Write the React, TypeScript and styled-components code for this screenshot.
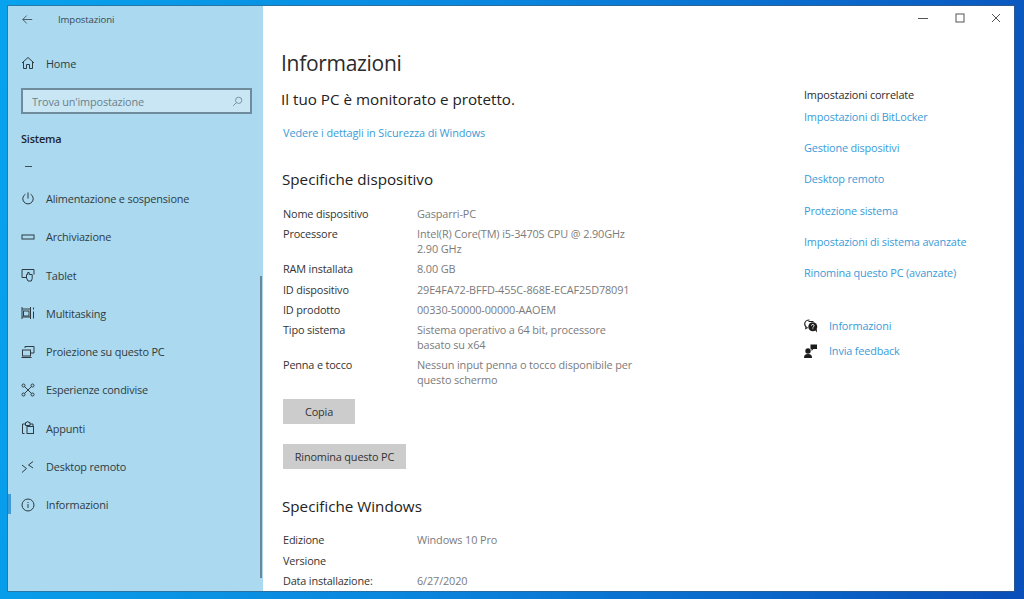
import styled, { createGlobalStyle } from 'styled-components';

const GlobalStyle = createGlobalStyle`
  html, body {
    margin: 0;
    height: 599px;
    overflow: hidden;
  }
  body {
    background: linear-gradient(100deg, #07a3ee 0%, #0a86de 45%, #0a4fb9 100%);
    font-family: 'Open Sans', 'Noto Sans', sans-serif;
    font-size: 10.9px;
    letter-spacing: -0.17px;
    color: #333;
  }
`;

const Desktop = styled.div`
  padding: 6px 10px 8px 8px;
  height: 585px;
`;

const Window = styled.div`
  display: flex;
  height: 585px;
  box-shadow: 0 0 0 1px rgba(70, 90, 110, 0.55);
  overflow: hidden;
`;

const Sidebar = styled.nav`
  position: relative;
  width: 255px;
  flex-shrink: 0;
  background: #abd9ef;
  display: flex;
  flex-direction: column;
`;

const TopBar = styled.div`
  display: flex;
  align-items: center;
  height: 26px;
  padding: 0 0 0 14px;
  gap: 25px;
  font-size: 9.6px;
  letter-spacing: -0.1px;
  color: #3a4a52;
`;

const NavItem = styled.div`
  display: flex;
  align-items: center;
  height: 38.3px;
  padding-left: 13px;
  gap: 11px;
  color: #2f3b42;
  white-space: nowrap;
`;

const HomeItem = styled(NavItem)`
  margin-top: 12px;
`;

const NavIcon = styled.svg`
  width: 14px;
  height: 14px;
  flex-shrink: 0;
  fill: none;
  stroke: #2f3b42;
  stroke-width: 1;
`;

const BackIcon = styled(NavIcon)`
  width: 11px;
  height: 11px;
`;

const SearchIcon = styled(NavIcon)`
  width: 11px;
  height: 11px;
  stroke: #64808f;
`;

const SearchBox = styled.div`
  display: flex;
  align-items: center;
  justify-content: space-between;
  box-sizing: border-box;
  width: 231px;
  height: 26px;
  margin: 6px 0 0 13px;
  padding: 0 7px 0 9px;
  border: 2px solid #6f8c9c;
  background: #c8e6f4;
  color: #6c808b;
`;

const GroupTitle = styled.div`
  margin: 17px 0 0 13px;
  font-weight: 600;
  color: #1d262b;
`;

const CutOff = styled.div`
  width: 7px;
  height: 1px;
  margin: 20px 0 12px 17px;
  background: #3f4d55;
`;

const Thumb = styled.div`
  position: absolute;
  top: 270px;
  right: 1px;
  width: 2px;
  height: 302px;
  background: #6d8796;
`;

const ActiveMark = styled.div`
  position: absolute;
  top: 488px;
  left: 0;
  width: 3px;
  height: 20px;
  background: #3f9bd6;
`;

const Main = styled.main`
  flex: 1;
  min-width: 0;
  background: #fff;
  display: flex;
  flex-direction: column;
`;

const Caption = styled.div`
  display: flex;
  justify-content: flex-end;
  align-items: center;
  height: 24px;
  padding-right: 13px;
  gap: 26.500px;
  flex-shrink: 0;
`;

const CaptionIcon = styled.svg`
  width: 10px;
  height: 10px;
  fill: none;
  stroke: #555;
  stroke-width: 1;
`;

const Columns = styled.div`
  display: flex;
  flex: 1;
  min-height: 0;
`;

const Content = styled.section`
  width: 523px;
  flex-shrink: 0;
  padding-left: 18px;
`;

const PageTitle = styled.h1`
  margin: 17px 0 0;
  font-size: 21px;
  line-height: 32px;
  font-weight: 400;
  letter-spacing: -0.3px;
  color: #2b2b2b;
`;

const Lead = styled.h2`
  margin: 8px 0 0;
  font-size: 15.2px;
  line-height: 24px;
  font-weight: 400;
  letter-spacing: 0;
  color: #222;
`;

const Link = styled.div`
  color: #3a9bd8;
  line-height: 16px;
  white-space: nowrap;
`;

const WarnLink = styled(Link)`
  margin: 14px 0 0 2px;
  letter-spacing: -0.1px;
`;

const SectionTitle = styled.h2<{ $top: number }>`
  margin: ${(p) => p.$top}px 0 0 1px;
  font-size: 15.2px;
  line-height: 24px;
  font-weight: 400;
  letter-spacing: 0;
  color: #222;
`;

const Specs = styled.dl<{ $gap: number; $top: number }>`
  display: grid;
  grid-template-columns: 134px 220px;
  row-gap: ${(p) => p.$gap}px;
  margin: ${(p) => p.$top}px 0 0 2px;
  line-height: 15px;
`;

const Label = styled.dt`
  color: #333;
  white-space: nowrap;
`;

const Value = styled.dd`
  margin: 0;
  color: #7b7b7b;
  min-height: 15px;
  letter-spacing: -0.13px;
`;

const Button = styled.button<{ $width: number; $top: number }>`
  display: block;
  width: ${(p) => p.$width}px;
  height: 25px;
  margin: ${(p) => p.$top}px 0 0 2px;
  padding: 0;
  border: 0;
  background: #cccccc;
  color: #333;
  font: inherit;
  letter-spacing: inherit;
`;

const Aside = styled.aside`
  flex: 1;
  padding-top: 57px;
`;

const AsideTitle = styled.div`
  color: #2b2b2b;
  line-height: 16px;
  margin-bottom: 6px;
`;

const RelatedLinks = styled.div`
  display: flex;
  flex-direction: column;
  gap: 15.2px;
`;

const HelpList = styled.div`
  display: flex;
  flex-direction: column;
  gap: 9px;
  margin-top: 37.500px;
`;

const HelpRow = styled.div`
  display: flex;
  align-items: center;
  gap: 11px;
`;

const HelpIcon = styled.svg`
  width: 14px;
  height: 14px;
  flex-shrink: 0;
  fill: #1c1c1c;
`;

const navItems = [
  {
    label: 'Alimentazione e sospensione',
    icon: (
      <>
        <path d="M7 1.500v6" />
        <path d="M4.400 3.200a5.200 5.200 0 1 0 5.200 0" />
      </>
    ),
  },
  {
    label: 'Archiviazione',
    icon: <rect x="1" y="5" width="12" height="4" />,
  },
  {
    label: 'Tablet',
    icon: (
      <>
        <path d="M6 9.500H1V1.500h12v5" />
        <path d="M7 13l-1.500-3V6.500h1.200v-2h1.500v2h3v4l-.8 2.500z" />
      </>
    ),
  },
  {
    label: 'Multitasking',
    icon: (
      <>
        <path d="M1 1v12M9.500 1v12M1 3h8.500M1 11h8.500" />
        <rect x="2.500" y="5" width="5.500" height="5" />
        <path d="M12.500 1.500v2M12.500 5.500v7" />
      </>
    ),
  },
  {
    label: 'Proiezione su questo PC',
    icon: (
      <>
        <path d="M4 3V1.500h9v6.500h-3" />
        <rect x="1.500" y="5" width="8" height="6" />
        <path d="M0.500 12.500h10" />
      </>
    ),
  },
  {
    label: 'Esperienze condivise',
    icon: (
      <>
        <circle cx="2.500" cy="2.500" r="1.500" />
        <circle cx="11.500" cy="2.500" r="1.500" />
        <circle cx="2.500" cy="11.500" r="1.500" />
        <circle cx="11.500" cy="11.500" r="1.500" />
        <path d="M3.500 3.500l7 7M10.500 3.500l-7 7" />
      </>
    ),
  },
  {
    label: 'Appunti',
    icon: (
      <>
        <path d="M3.500 12.500H1.500V3h3M9 3h3v2" />
        <path d="M4.500 1.500h1.200a1 1 0 0 1 2 0H9v3H4.500z" />
        <rect x="6" y="5.500" width="6.500" height="7" />
      </>
    ),
  },
  {
    label: 'Desktop remoto',
    icon: (
      <>
        <path d="M1 5l4.500 3.500L1 12.500" />
        <path d="M12 1.500L7.500 5l4.500 3" />
      </>
    ),
  },
  {
    label: 'Informazioni',
    icon: (
      <>
        <circle cx="7" cy="7" r="6" />
        <path d="M7 6v4M7 4v1" />
      </>
    ),
  },
];

const specs = [
  ['Nome dispositivo', 'Gasparri-PC'],
  ['Processore', 'Intel(R) Core(TM) i5-3470S CPU @ 2.90GHz 2.90 GHz'],
  ['RAM installata', '8.00 GB'],
  ['ID dispositivo', '29E4FA72-BFFD-455C-868E-ECAF25D78091'],
  ['ID prodotto', '00330-50000-00000-AAOEM'],
  ['Tipo sistema', 'Sistema operativo a 64 bit, processore basato su x64'],
  ['Penna e tocco', 'Nessun input penna o tocco disponibile per questo schermo'],
];

const windowsSpecs = [
  ['Edizione', 'Windows 10 Pro'],
  ['Versione', ''],
  ['Data installazione:', '6/27/2020'],
];

const related = [
  'Impostazioni di BitLocker',
  'Gestione dispositivi',
  'Desktop remoto',
  'Protezione sistema',
  'Impostazioni di sistema avanzate',
  'Rinomina questo PC (avanzate)',
];

function SpecRows({ rows }: { rows: string[][] }) {
  return (
    <>
      {rows.map(([k, v]) => (
        <div key={k} style={{ display: 'contents' }}>
          <Label>{k}</Label>
          <Value>{v}</Value>
        </div>
      ))}
    </>
  );
}

export default function App() {
  return (
    <>
      <GlobalStyle />
      <Desktop>
        <Window>
          <Sidebar>
            <TopBar>
              <BackIcon viewBox="0 0 14 14">
                <path d="M13 7H1M6 2L1 7l5 5" />
              </BackIcon>
              <span>Impostazioni</span>
            </TopBar>
            <HomeItem>
              <NavIcon viewBox="0 0 14 14">
                <path d="M1 7l6-5.500L13 7M2.500 6v6.500h3V8.500h3v4h3V6" />
              </NavIcon>
              <span>Home</span>
            </HomeItem>
            <SearchBox>
              <span>Trova un'impostazione</span>
              <SearchIcon viewBox="0 0 14 14">
                <circle cx="8.500" cy="5.500" r="4" />
                <path d="M5.500 8.500L1.500 12.500" />
              </SearchIcon>
            </SearchBox>
            <GroupTitle>Sistema</GroupTitle>
            <CutOff />
            {navItems.map((item) => (
              <NavItem key={item.label}>
                <NavIcon viewBox="0 0 14 14">{item.icon}</NavIcon>
                <span>{item.label}</span>
              </NavItem>
            ))}
            <ActiveMark />
            <Thumb />
          </Sidebar>
          <Main>
            <Caption>
              <CaptionIcon viewBox="0 0 10 10">
                <path d="M0 5.500h10" />
              </CaptionIcon>
              <CaptionIcon viewBox="0 0 10 10">
                <rect x="1" y="1" width="8" height="8" />
              </CaptionIcon>
              <CaptionIcon viewBox="0 0 10 10">
                <path d="M1 1l8 8M9 1l-8 8" />
              </CaptionIcon>
            </Caption>
            <Columns>
              <Content>
                <PageTitle>Informazioni</PageTitle>
                <Lead>Il tuo PC è monitorato e protetto.</Lead>
                <WarnLink>Vedere i dettagli in Sicurezza di Windows</WarnLink>
                <SectionTitle $top={26}>Specifiche dispositivo</SectionTitle>
                <Specs $gap={5.200} $top={15}>
                  <SpecRows rows={specs} />
                </Specs>
                <Button $width={72} $top={12}>Copia</Button>
                <Button $width={123} $top={20}>Rinomina questo PC</Button>
                <SectionTitle $top={24.500}>Specifiche Windows</SectionTitle>
                <Specs $gap={5.500} $top={14.500}>
                  <SpecRows rows={windowsSpecs} />
                </Specs>
              </Content>
              <Aside>
                <AsideTitle>Impostazioni correlate</AsideTitle>
                <RelatedLinks>
                  {related.map((r) => (
                    <Link key={r}>{r}</Link>
                  ))}
                </RelatedLinks>
                <HelpList>
                  <HelpRow>
                    <HelpIcon viewBox="0 0 14 14">
                      <path d="M5.500 1C2.700 1 .700 2.800.700 5c0 1.100.5 2 1.300 2.700L1.800 9.500l1.900-1" fill="none" stroke="#1c1c1c" strokeWidth="1.200" />
                      <path d="M4.500 2.500H9.500" fill="none" stroke="#1c1c1c" strokeWidth="1" />
                      <circle cx="8.800" cy="7.800" r="4.500" />
                      <path d="M11 11l2 2.500-.2-3.500z" />
                      <path d="M7.500 6.700c0-1.700 2.600-1.700 2.600 0 0 1-1.300 1-1.300 2M8.800 9.400v.8" fill="none" stroke="#fff" strokeWidth="0.900" />
                    </HelpIcon>
                    <Link>Informazioni</Link>
                  </HelpRow>
                  <HelpRow>
                    <HelpIcon viewBox="0 0 14 14">
                      <circle cx="4" cy="7" r="2.700" />
                      <path d="M0 14c0-2.800 1-4 4-4s4 1.200 4 4z" />
                      <path d="M6.500 .5H13v4.500H9.500L7.500 7V5H6.500z" />
                    </HelpIcon>
                    <Link>Invia feedback</Link>
                  </HelpRow>
                </HelpList>
              </Aside>
            </Columns>
          </Main>
        </Window>
      </Desktop>
    </>
  );
}
